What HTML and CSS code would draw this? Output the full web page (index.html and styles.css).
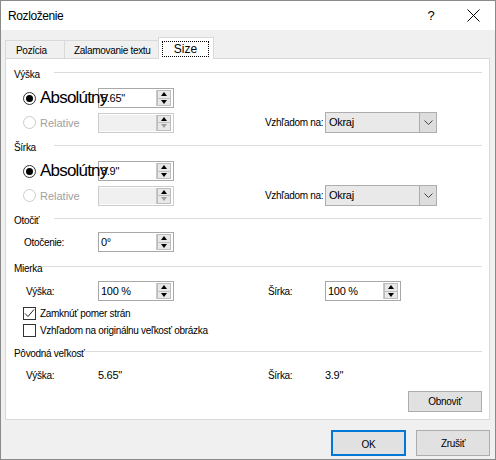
FILE: index.html
```html
<!DOCTYPE html>
<html lang="sk">
<head>
  <meta charset="UTF-8">
  <title>Rozloženie</title>
  <link rel="stylesheet" href="styles.css">
</head>
<body>
  <div class="window">
    <div class="titlebar">
      <span class="title">Rozloženie</span>
      <span class="help">?</span>
      <span class="close">
        <svg width="13" height="13" viewBox="0 0 13 13"><path d="M0.5 0.5 L12.5 12.5 M12.5 0.5 L0.5 12.5" stroke="#000" stroke-width="1"/></svg>
      </span>
    </div>

    <div class="client">
      <div class="tabs">
        <div class="tab first">Pozícia</div>
        <div class="tab">Zalamovanie textu</div>
        <div class="tab active"><span class="focus">Size</span></div>
      </div>

      <div class="panel">
        <!-- height -->
        <div class="heading wide"><span>Výška</span><i></i></div>
        <div class="row r-abs">
          <label class="opt big"><span class="radio on"></span><span class="opt-text">Absolútny</span></label>
          <div class="spin"><span class="val">5.65"</span><span class="btns"><i class="up"></i><i class="down"></i></span></div>
        </div>
        <div class="row r-rel">
          <label class="opt off"><span class="radio"></span><span class="opt-text">Relative</span></label>
          <div class="spin disabled"><span class="val"></span><span class="btns"><i class="up"></i><i class="down"></i></span></div>
          <span></span>
          <span class="lbl">Vzhľadom na:</span>
          <div class="combo"><span class="val">Okraj</span><span class="arrow"><svg width="9" height="5" viewBox="0 0 9 5"><path d="M0.5 0.5 L4.5 4.5 L8.5 0.5" fill="none" stroke="#444"/></svg></span></div>
        </div>

        <!-- width -->
        <div class="heading wide"><span>Šírka</span><i></i></div>
        <div class="row r-abs">
          <label class="opt big"><span class="radio on"></span><span class="opt-text">Absolútny</span></label>
          <div class="spin"><span class="val">3.9"</span><span class="btns"><i class="up"></i><i class="down"></i></span></div>
        </div>
        <div class="row r-rel">
          <label class="opt off"><span class="radio"></span><span class="opt-text">Relative</span></label>
          <div class="spin disabled"><span class="val"></span><span class="btns"><i class="up"></i><i class="down"></i></span></div>
          <span></span>
          <span class="lbl">Vzhľadom na:</span>
          <div class="combo"><span class="val">Okraj</span><span class="arrow"><svg width="9" height="5" viewBox="0 0 9 5"><path d="M0.5 0.5 L4.5 4.5 L8.5 0.5" fill="none" stroke="#444"/></svg></span></div>
        </div>

        <!-- rotation -->
        <div class="heading wide h-rot"><span>Otočiť</span><i></i></div>
        <div class="row r-rot">
          <span class="lbl pad-rot">Otočenie:</span>
          <div class="spin"><span class="val">0°</span><span class="btns"><i class="up"></i><i class="down"></i></span></div>
        </div>

        <!-- scale -->
        <div class="heading h-scale"><span>Mierka</span><i></i></div>
        <div class="row r-scale">
          <span class="lbl pad-left">Výška:</span>
          <div class="spin"><span class="val">100 %</span><span class="btns"><i class="up"></i><i class="down"></i></span></div>
          <span></span>
          <span class="lbl pad-right">Šírka:</span>
          <div class="spin short"><span class="val">100 %</span><span class="btns"><i class="up"></i><i class="down"></i></span></div>
        </div>
        <label class="check c-lock"><span class="box"><svg width="11" height="11" viewBox="0 0 11 11"><path d="M1 5.5 L4 8.5 L10 1.5" fill="none" stroke="#222" stroke-width="1"/></svg></span><span>Zamknúť pomer strán</span></label>
        <label class="check c-orig"><span class="box"></span><span>Vzhľadom na originálnu veľkosť obrázka</span></label>

        <!-- original size -->
        <div class="heading h-orig"><span>Pôvodná veľkosť</span><i></i></div>
        <div class="row r-orig">
          <span class="lbl pad-left">Výška:</span>
          <span class="num">5.65"</span>
          <span></span>
          <span class="lbl pad-right">Šírka:</span>
          <span class="num">3.9"</span>
        </div>
        <div class="reset-row">
          <button class="btn reset">Obnoviť</button>
        </div>
      </div>

      <div class="footer">
        <button class="btn default">OK</button>
        <button class="btn">Zrušiť</button>
      </div>
    </div>
  </div>
</body>
</html>
```

FILE: styles.css
```css
:root {
   --face: #f0f0f0;
   --line: #dcdcdc;
   --edge: #adadad;
   --btn: #e1e1e1;
   --muted: #a0a0a0;
   --accent: #0078d7;
}

* {
   box-sizing: border-box;
   margin: 0;
   padding: 0;
}

body {
   font-family: "Liberation Sans", Arial, sans-serif;
   font-size: 10px;
   letter-spacing: -0.3px;
   color: #000;
   background: #fff;
}

.window {
   width: 496px;
   height: 460px;
   border: 1px solid #8a8a8a;
   display: flex;
   flex-direction: column;
   background: var(--face);
}

/* title bar */
.titlebar {
   height: 29px;
   background: #fff;
   display: flex;
   align-items: center;
   padding-left: 7px;
}

.title {
   font-size: 12px;
   letter-spacing: -0.4px;
   flex: 1;
}

.help {
   font-size: 13px;
   width: 36px;
   text-align: center;
   margin-right: 6px;
}

.close {
   width: 36px;
   display: flex;
   justify-content: center;
   margin-right: 4px;
}

.client {
   flex: 1;
   padding: 7px 5px 0 4px;
   display: flex;
   flex-direction: column;
}

/* tabs */
.tabs {
   height: 21px;
   display: flex;
   align-items: flex-end;
}

.tab {
   height: 18px;
   border: 1px solid #d9d9d9;
   border-bottom: none;
   border-left: none;
   background: var(--face);
   padding: 4px 0 0 10px;
   font-size: 10px;
}

.tab.first {
   width: 60px;
   border-left: 1px solid #d9d9d9;
}

.tab:nth-child(2) {
   width: 94px;
   padding-left: 9px;
}

.tab.active {
   width: 56px;
   height: 22px;
   margin-left: -1px;
   margin-bottom: -1px;
   border-left: 1px solid #d9d9d9;
   background: #fff;
   position: relative;
   z-index: 1;
   padding: 4px 0 0 4px;
}

.focus {
   display: block;
   width: 45px;
   height: 14px;
   outline: 1px dotted #000;
   text-align: center;
   font-size: 12px;
   line-height: 14px;
   letter-spacing: 0;
}

/* panel */
.panel {
   width: 485px;
   height: 362px;
   border: 1px solid #d9d9d9;
   background: #fff;
   padding: 0 7px 0 8px;
   display: flex;
   flex-direction: column;
}

.heading {
   height: 13px;
   display: flex;
   align-items: center;
   margin-top: 9px;
}

.heading span {
   line-height: 13px;
}

.heading i {
   flex: 1;
   height: 1px;
   background: var(--line);
   margin-top: -5px;
}

.heading.wide span {
   width: 40px;
}

.h-scale,
.h-orig {
   margin-top: 10px;
}

.row {
   display: grid;
   grid-template-columns: 84px 76px 91px 60px 112px;
   align-items: center;
   height: 20px;
}

.r-abs {
   margin-top: 7px;
}

.r-rel {
   margin-top: 4px;
}

.r-rot {
   margin-top: 5px;
}

.r-scale {
   margin-top: 6px;
}

.r-orig {
   margin-top: 8px;
   height: 14px;
}

/* radio options */
.opt {
   display: flex;
   align-items: center;
   padding-left: 9px;
   gap: 4px;
   white-space: nowrap;
   position: relative;
   z-index: 1;
}

.radio {
   width: 13px;
   height: 13px;
   border-radius: 50%;
   border: 1px solid #333;
   background: #fff;
   flex: none;
   display: flex;
   align-items: center;
   justify-content: center;
}

.radio.on::after {
   content: "";
   width: 7px;
   height: 7px;
   border-radius: 50%;
   background: #000;
}

.opt.big .opt-text {
   font-size: 17px;
   letter-spacing: -0.8px;
   line-height: 20px;
}

.opt.off .radio {
   border-color: #cccccc;
}

.opt.off .opt-text {
   color: var(--muted);
   font-size: 11px;
   letter-spacing: 0;
}

.lbl {
   white-space: nowrap;
}

.lbl.pad-rot {
   padding-left: 10px;
}

.lbl.pad-left {
   padding-left: 12px;
}

.lbl.pad-right {
   padding-left: 3px;
}

/* spin box */
.spin {
   height: 20px;
   border: 1px solid #a8a8a8;
   background: #fff;
   display: flex;
   align-items: stretch;
   padding: 1px 2px 1px 0;
}

.spin.short {
   width: 76px;
}

.spin .val {
   flex: 1;
   padding-left: 2px;
   line-height: 16px;
   font-size: 11px;
}

.btns {
   width: 15px;
   display: flex;
   flex-direction: column;
   border-left: 1px solid #c8c8c8;
}

.btns i {
   flex: 1;
   background: #e8e8e8;
   border: 1px solid #bdbdbd;
   display: flex;
   align-items: center;
   justify-content: center;
}

.btns i + i {
   border-top: none;
}

.btns i::after {
   content: "";
   border-left: 3px solid transparent;
   border-right: 3px solid transparent;
}

.btns .up::after {
   border-bottom: 4px solid #000;
}

.btns .down::after {
   border-top: 4px solid #000;
}

.spin.disabled {
   border-color: #cccccc;
}

.spin.disabled .val {
   background: var(--face);
}

.spin.disabled .btns .down::after {
   border-top-color: var(--muted);
}

/* combo */
.combo {
   height: 21px;
   border: 1px solid var(--edge);
   background: #e9e9e9;
   display: flex;
   align-items: stretch;
}

.combo .val {
   flex: 1;
   padding-left: 3px;
   line-height: 19px;
   font-size: 11px;
}

.combo .arrow {
   width: 17px;
   border-left: 1px solid var(--edge);
   background: #dddddd;
   display: flex;
   align-items: center;
   justify-content: center;
}

/* check boxes */
.check {
   display: flex;
   align-items: center;
   gap: 4px;
   height: 13px;
   padding-left: 9px;
}

.c-lock {
   margin-top: 6px;
}

.c-orig {
   margin-top: 4px;
}

.box {
   width: 13px;
   height: 13px;
   border: 1px solid #333;
   background: #fff;
   display: flex;
   align-items: center;
   justify-content: center;
}

.num {
   font-size: 11px;
}

/* buttons */
.reset-row {
   display: flex;
   justify-content: flex-end;
   margin-top: 9px;
}

.btn {
   font-family: inherit;
   font-size: 10px;
   letter-spacing: -0.3px;
   color: #000;
   background: var(--btn);
   border: 1px solid var(--edge);
   height: 26px;
   width: 74px;
}

.btn.reset {
   height: 21px;
}

.footer {
   display: flex;
   justify-content: flex-end;
   gap: 10px;
   margin-top: 10px;
}

.btn.default {
   border: 2px solid var(--accent);
   width: 75px;
   padding-top: 3px;
}
```
